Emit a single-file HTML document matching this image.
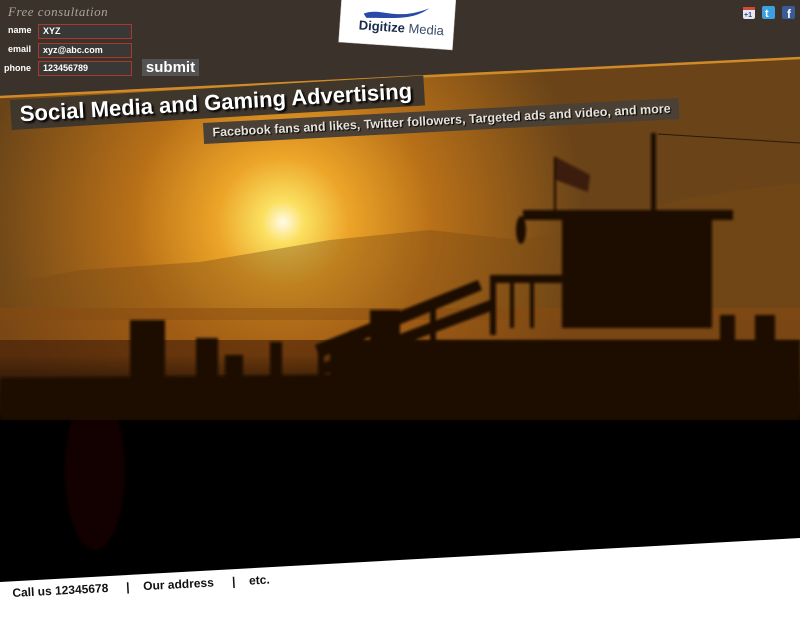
<!DOCTYPE html>
<html><head><meta charset="utf-8"><style>
html,body{margin:0;padding:0;width:800px;height:626px;overflow:hidden;background:#fff;font-family:"Liberation Sans",sans-serif}
#scene{position:absolute;left:0;top:0}
.lbl{position:absolute;color:#fff;font-size:9px;font-weight:bold}
.inp{position:absolute;left:38px;width:88px;height:13px;border:1px solid #a83a2c;background:#3a3836;color:#fff;font-size:9px;font-weight:bold;line-height:13px;padding-left:4px}
.t1{position:absolute;left:10px;top:100px;background:#3f362c;color:#fff;font-weight:bold;font-size:22px;line-height:26px;padding:2px 12px 2px 9px;transform:rotate(-3.4deg);transform-origin:left top;text-shadow:2px 2px 2px #000;white-space:nowrap}
.t2{position:absolute;left:203px;top:123px;background:#4a4035;color:#e6e2dc;font-weight:bold;font-size:12.5px;line-height:15px;padding:3px 8px 3px 9px;transform:rotate(-3deg);transform-origin:left top;text-shadow:1px 1px 1px #000;white-space:nowrap}
.foot{position:absolute;left:12px;top:586px;width:300px;height:20px;font-size:12px;font-weight:bold;color:#111;transform:rotate(-3deg);transform-origin:left top;white-space:nowrap}
.foot span{position:absolute;top:0}
</style></head><body>
<svg id="scene" width="800" height="626" viewBox="0 0 800 626">
<defs>
<radialGradient id="sun" cx="283" cy="222" r="300" gradientUnits="userSpaceOnUse">
<stop offset="0" stop-color="#fffbe8"/><stop offset="0.07" stop-color="#fbe060"/><stop offset="0.22" stop-color="#eca428"/><stop offset="0.5" stop-color="#b87018"/><stop offset="1" stop-color="#6a4418"/>
</radialGradient>
<linearGradient id="dark" x1="0" y1="0" x2="0" y2="1">
<stop offset="0" stop-color="#000" stop-opacity="0"/><stop offset="1" stop-color="#000" stop-opacity="1"/>
</linearGradient>
<filter id="bl"><feGaussianBlur stdDeviation="1.2"/></filter>
</defs>
<rect width="800" height="626" fill="url(#sun)"/>
<path d="M0 285 L80 270 L200 262 L330 240 L430 230 L520 240 L600 222 L680 200 L740 190 L800 183 L800 320 L0 320Z" fill="#7a4a14" opacity="0.4"/>
<rect x="0" y="308" width="800" height="70" fill="#8a4a10" opacity="0.5"/>
<rect x="0" y="340" width="800" height="60" fill="#3a1806" opacity="0.55"/>
<rect x="0" y="355" width="800" height="65" fill="url(#dark)"/>
<rect x="0" y="415" width="800" height="211" fill="#000"/>
<ellipse cx="95" cy="470" rx="30" ry="80" fill="#1a0500" opacity="0.7" filter="url(#bl)"/>
<g fill="#1a0c04" filter="url(#bl)">
<rect x="130" y="320" width="35" height="70"/><rect x="196" y="338" width="22" height="45"/><rect x="270" y="342" width="12" height="40"/><rect x="225" y="355" width="18" height="30"/>
<rect x="523" y="210" width="210" height="10"/><rect x="562" y="218" width="150" height="110"/><rect x="651" y="133" width="5" height="85"/>
<path d="M556 157 L590 175 L588 192 L556 180Z" fill="#3a1a10"/><rect x="554" y="157" width="2" height="55"/>
<ellipse cx="521" cy="230" rx="5" ry="14"/>
<rect x="490" y="275" width="80" height="8"/><rect x="490" y="275" width="6" height="60"/><rect x="510" y="278" width="4" height="50"/><rect x="530" y="278" width="4" height="50"/>
<path d="M315 345 L478 280 L482 290 L320 358Z"/><path d="M318 365 L490 300 L494 310 L322 375Z"/>
<rect x="318" y="345" width="6" height="40"/><rect x="350" y="330" width="6" height="55"/><rect x="390" y="315" width="6" height="60"/><rect x="430" y="300" width="6" height="60"/>
<rect x="330" y="340" width="470" height="60"/><rect x="370" y="310" width="30" height="60"/>
<rect x="720" y="315" width="15" height="50"/><rect x="755" y="315" width="20" height="50"/>
<path d="M0 378 L800 370 L800 420 L0 420Z"/>
</g>
<line x1="658" y1="134" x2="800" y2="143" stroke="#2a1a0a" stroke-width="1"/>
<path d="M0 0 H800 V58 L0 97Z" fill="#3a322b"/>
<path d="M0 97 L800 58" stroke="#d08a28" stroke-width="2.5"/>
<path d="M0 582 L800 538 V626 H0Z" fill="#fff"/>
<g transform="rotate(4 397 24)">
<rect x="340" y="-10" width="114" height="56" fill="#fff" stroke="#ccc" stroke-width="0.5"/>
<path d="M363 16 C380 8 395 22 428 6 C412 20 390 18 366 20Z" fill="#2a4aa8"/>
<text x="359" y="32" font-family="Liberation Sans,sans-serif" font-size="13" fill="#1a2a4a"><tspan font-weight="bold">Digitize</tspan><tspan fill="#3a4a6a"> Media</tspan></text>
</g>
<rect x="743" y="7" width="12" height="12" rx="2" fill="#e8e8f0"/><rect x="743" y="7" width="12" height="3" fill="#d04a3a"/><text x="744" y="17" font-size="7" font-weight="bold" fill="#2a4a8a" font-family="Liberation Sans">+1</text>
<rect x="762" y="6" width="13" height="13" rx="2" fill="#3aa0e0"/><text x="765" y="17" font-size="11" font-weight="bold" fill="#fff" font-family="Liberation Sans">t</text>
<rect x="782" y="6" width="13" height="13" rx="2" fill="#3a5a98"/><text x="787" y="18" font-size="12" font-weight="bold" fill="#fff" font-family="Liberation Sans">f</text>
</svg>
<div style="position:absolute;left:8px;top:4px;color:#a9a39b;font-size:13px;font-style:italic;font-family:'Liberation Serif',serif;letter-spacing:0.5px">Free consultation</div>
<div class="lbl" style="left:8px;top:25px">name</div>
<div class="lbl" style="left:8px;top:44px">email</div>
<div class="lbl" style="left:4px;top:63px">phone</div>
<div class="inp" style="top:24px">XYZ</div>
<div class="inp" style="top:43px">xyz@abc.com</div>
<div class="inp" style="top:61px">123456789</div>
<div style="position:absolute;left:142px;top:59px;width:57px;height:17px;background:#555352;color:#fff;font-weight:bold;font-size:15px;line-height:17px;text-align:center">submit</div>
<div class="t1">Social Media and Gaming Advertising</div>
<div class="t2">Facebook fans and likes, Twitter followers, Targeted ads and video, and more</div>
<div class="foot"><span style="left:0">Call us 12345678</span><span style="left:114px">|</span><span style="left:131px">Our address</span><span style="left:220px">|</span><span style="left:237px">etc.</span></div>
</body></html>
